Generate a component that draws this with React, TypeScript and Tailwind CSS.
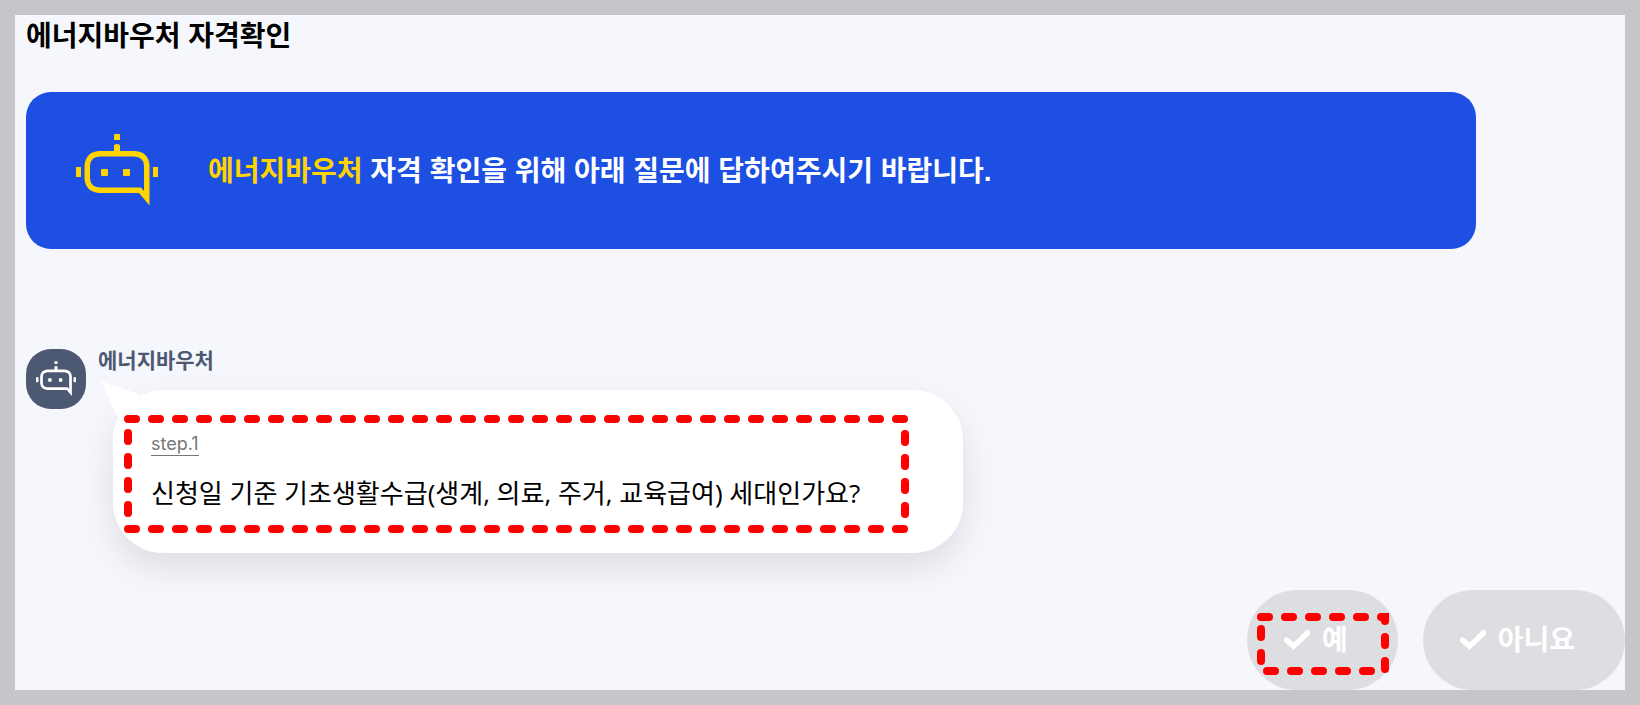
import React from "react";

function BotIcon({ className }: { className: string }) {
  return (
    <svg viewBox="0 0 82 73" fill="currentColor" className={className} aria-hidden="true">
      <rect x="38" y="0" width="6" height="6" rx="0.5" />
      <path d="M38 18V12Q38 10 41 10Q44 10 44 12V18Z" />
      <rect x="0" y="33" width="5" height="10" />
      <rect x="77" y="33" width="5" height="10" />
      <rect x="25" y="35" width="7" height="7" rx="1" />
      <rect x="47" y="35" width="7" height="7" rx="1" />
      <path d="M23 17H59Q73 18 73.500 32V71.500L63 59H23Q9 57.500 8.500 44V32Q9.500 18 23 17ZM24 22.500Q14 23 14 32V44Q14 53 24 53.500H65L68 57V32Q68 23 58 22.500Z" fillRule="evenodd" />
    </svg>
  );
}

function CheckIcon() {
  return (
    <svg width="26" height="20" viewBox="0 0 26 20" fill="none" stroke="currentColor" strokeWidth="5" aria-hidden="true">
      <path d="M1.500 9.500L9.500 16.500L24.500 2.500" strokeLinecap="butt" />
      <path d="M2.500 10L9.500 16L23.500 2.500" strokeLinecap="round" />
    </svg>
  );
}

function QuestionHighlight() {
  return (
    <svg
      width="785"
      height="118"
      className="pointer-events-none absolute top-[25px] left-[11px]"
      fill="none"
      stroke="#ff0000"
      strokeWidth="8"
      strokeLinecap="round"
      strokeDasharray="8 16"
      aria-hidden="true"
    >
      <path d="M4 4H780M4 114H780M4 18V98M781 19V99" />
    </svg>
  );
}

function AnswerHighlight() {
  return (
    <svg
      width="132"
      height="62"
      className="pointer-events-none absolute top-[23px] left-[10px]"
      fill="none"
      stroke="#ff0000"
      strokeWidth="8"
      strokeLinecap="round"
      strokeDasharray="8 16"
      aria-hidden="true"
    >
      <path d="M4 4H108M10 58H114M4 16V48M128 24V56" />
      <path d="M120 4a4 4 0 0 1 4-4h8v8a4 4 0 0 1-8 0a4 4 0 0 1-4-4Z" fill="#ff0000" stroke="none" />
    </svg>
  );
}

function AnswerButton({ label, children }: { label: string; children?: React.ReactNode }) {
  return (
    <button
      type="button"
      className="relative flex h-[100px] items-center gap-3 rounded-[50px] bg-[#dddee1] pr-[50px] pl-[37px] text-[28px] font-bold text-white"
    >
      <CheckIcon />
      <span className="pt-0.5">{label}</span>
      {children}
    </button>
  );
}

export default function App() {
  return (
    <main className="border-[15px] border-[#c5c6ca] bg-[#f6f7fc] font-['Liberation_Sans','Noto_Sans_CJK_KR',sans-serif] text-black">
      <div className="pl-[11px]">
        <h1 className="pt-0.5 text-[28px] leading-10 font-bold">에너지바우처 자격확인</h1>

        <section className="mt-[35px] flex h-[157px] max-w-[1450px] items-center gap-[50px] rounded-[25px] bg-[#1c4fe2] px-[50px] text-[28px] font-bold text-white">
          <BotIcon className="h-[73px] w-[82px] shrink-0 text-[#ffd400]" />
          <p className="pt-0.5 leading-10">
            <span className="text-[#ffd400]">에너지바우처</span> 자격 확인을 위해 아래 질문에 답하여주시기 바랍니다.
          </p>
        </section>

        <section className="mt-[100px] flex gap-3">
          <div className="flex size-[60px] shrink-0 items-center justify-center rounded-[25px] bg-[#4d5972] text-white">
            <BotIcon className="h-9 w-10" />
          </div>
          <div className="flex-1">
            <h2 className="text-[21px] leading-6 font-bold text-[#4d5972]">에너지바우처</h2>
            <div className="relative mt-[17px] ml-[15px] max-w-[850px] rounded-[50px] bg-white px-[38px] pt-10 pb-10 shadow-[0_15px_35px_rgba(0,0,0,0.10)]">
              <svg width="42" height="40" className="absolute -top-[9px] -left-3" fill="#ffffff" aria-hidden="true">
                <path d="M0 0L39 13.500L42 40L17 37Z" />
              </svg>
              <p className="relative w-fit border-b border-[#777777] pt-0.5 font-['Inter',sans-serif] text-lg leading-[23px] text-[#777777]">step.1</p>
              <p className="relative mt-[17px] font-['Open_Sans','Noto_Sans_CJK_KR',sans-serif] text-[26px] leading-10">
                신청일 기준 기초생활수급(생계, 의료, 주거, 교육급여) 세대인가요?
              </p>
              <QuestionHighlight />
            </div>
          </div>
        </section>

        <div className="mt-[37px] flex justify-end gap-[25px]">
          <AnswerButton label="예">
            <AnswerHighlight />
          </AnswerButton>
          <AnswerButton label="아니요" />
        </div>
      </div>
    </main>
  );
}
